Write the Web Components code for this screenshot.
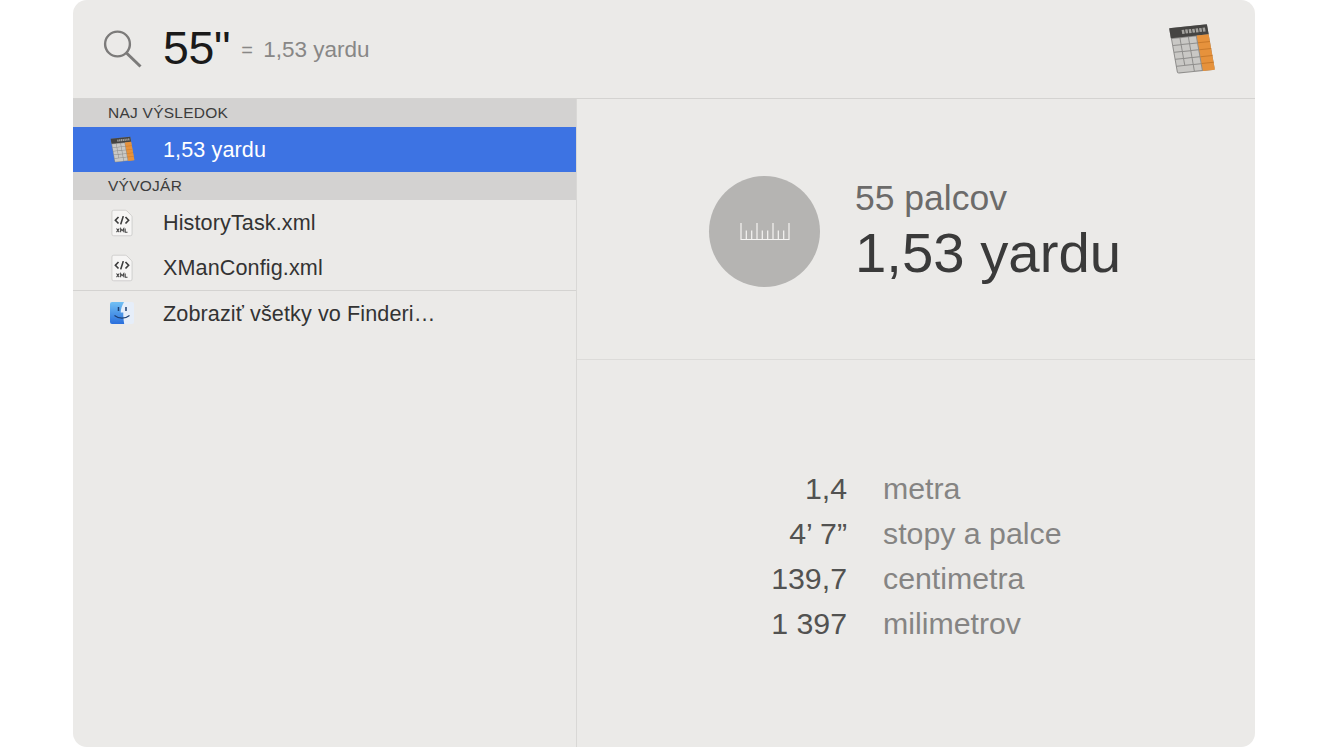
<!DOCTYPE html>
<html lang="sk">
<head>
<meta charset="utf-8">
<title>Spotlight</title>
<style>
  html, body { margin: 0; height: 100%; background: #fff; }
  body { display: flex; justify-content: center; font-family: "Liberation Sans", Arial, sans-serif; }
</style>
</head>
<body>
<svg width="0" height="0" style="position:absolute">
  <defs>
    <linearGradient id="finderBlue" x1="0" y1="0" x2="0" y2="1">
      <stop offset="0" stop-color="#71c0f4"/>
      <stop offset="1" stop-color="#2a6fdc"/>
    </linearGradient>
    <symbol id="calc" viewBox="0 0 48 52">
      <g transform="rotate(-6 24 26) translate(-1.800 0) skewX(4)">
        <rect x="5" y="3" width="38" height="46" rx="2" fill="#8f8e8c"/>
        <rect x="5" y="3" width="38" height="10" fill="#454442"/>
        <rect x="31" y="13" width="12" height="36" fill="#e6923c"/>
        <g fill="#c9c8c5">
          <rect x="6" y="14" width="7.500" height="6"/><rect x="14.500" y="14" width="7.500" height="6"/><rect x="23" y="14" width="7" height="6"/>
          <rect x="6" y="21" width="7.500" height="6"/><rect x="14.500" y="21" width="7.500" height="6"/><rect x="23" y="21" width="7" height="6"/>
          <rect x="6" y="28" width="7.500" height="6"/><rect x="14.500" y="28" width="7.500" height="6"/><rect x="23" y="28" width="7" height="6"/>
          <rect x="6" y="35" width="7.500" height="6"/><rect x="14.500" y="35" width="7.500" height="6"/><rect x="23" y="35" width="7" height="6"/>
          <rect x="6" y="42" width="16" height="6"/><rect x="23" y="42" width="7" height="6"/>
        </g>
        <g fill="#c97a2b"><rect x="31" y="20" width="12" height="1"/><rect x="31" y="27" width="12" height="1"/><rect x="31" y="34" width="12" height="1"/><rect x="31" y="41" width="12" height="1"/></g>
        <path d="M17 8h24" fill="none" stroke="#a3a29e" stroke-width="4" stroke-dasharray="2.500 1"/>
      </g>
    </symbol>
    <symbol id="xml" viewBox="0 0 24 30">
      <path d="M3 1h12.500q1 0 1.700.7l5 5q.8.800.8 1.800V27a2 2 0 0 1-2 2H3a2 2 0 0 1-2-2V3a2 2 0 0 1 2-2z" fill="#f6f5f4" stroke="#cdccca"/>
      <path d="M8.200 8.500 4.800 12l3.400 3.500M15.800 8.500l3.400 3.500-3.400 3.500M13.400 7.500l-2.800 9" fill="none" stroke="#3d3d3d" stroke-width="1.800"/>
      <path d="M6 21l3 4M9 21l-3 4M10.500 25v-4l1.700 2.400 1.700-2.400v4M15.500 21v4H18" fill="none" stroke="#444" stroke-width="1.100"/>
    </symbol>
    <symbol id="finder" viewBox="0 0 24 22">
      <rect x="0" y="0" width="24" height="22" rx="2" fill="#e6eef9"/>
      <path d="M2 0h12c-2 3.500-3.200 7-3.300 10.500h2.600c-.1 3.500.2 7.500.9 11.500H2a2 2 0 0 1-2-2V2a2 2 0 0 1 2-2z" fill="url(#finderBlue)"/>
      <path d="M8.500 5v4M16 5v4" stroke="#1d3f72" stroke-width="1.500" fill="none"/>
      <path d="M4.500 13.500c4.500 3.500 10.500 3.500 15 0" stroke="#1d3f72" stroke-width="1.200" fill="none"/>
    </symbol>
  </defs>
</svg>
<spot-window></spot-window>
<script>
// svg <use> does not cross shadow roots, so symbols are copied in per root
const iconDefs = () => document.querySelector('svg defs').outerHTML;

class SpotSearch extends HTMLElement {
  constructor() {
    super();
    this.attachShadow({ mode: 'open' });
    this.shadowRoot.innerHTML = `
      <style>
        :host { display: flex; align-items: center; height: 99px; box-sizing: border-box; padding: 0 39px 0 30px; border-bottom: 1px solid #d4d3d1; flex: none; }
        .glass { flex: none; margin-top: -1px; }
        .query { font-size: 46.500px; color: #1a1a1a; margin-left: 20px; margin-top: -2px; letter-spacing: -.3px; }
        .answer { font-size: 22.500px; color: #888786; margin-left: 11px; margin-top: 1px; }
        .eq { margin-right: 4px; font-size: 20px; }
        .logo { margin-left: auto; margin-top: -1px; filter: blur(.5px); }
      </style>
      <svg class="glass" width="40" height="40" viewBox="0 0 40 40"><circle cx="14.500" cy="15" r="12.400" fill="none" stroke="#7c7b7a" stroke-width="2.400"/><path d="M23.500 24 37.500 37.500" stroke="#7c7b7a" stroke-width="3" fill="none"/></svg>
      <span class="query">55"</span>
      <span class="answer"><span class="eq">=</span> 1,53 yardu</span>
      <svg class="logo" width="48" height="52" viewBox="0 0 48 52">${iconDefs()}<use href="#calc"/></svg>
    `;
  }
}

class SpotSection extends HTMLElement {
  constructor() {
    super();
    this.attachShadow({ mode: 'open' });
    this.shadowRoot.innerHTML = `
      <style>
        :host { display: flex; align-items: center; height: 28px; padding: 0 35px; background: #d3d2d1; color: #3c3c3c; font-size: 15.500px; letter-spacing: .25px; }
      </style>
      <slot></slot>
    `;
  }
}

const ROW_ICONS = {
  calc: { w: 25, h: 27, vb: '0 0 48 52' },
  xml: { w: 22, h: 28, vb: '0 0 24 30' },
  finder: { w: 24, h: 22, vb: '0 0 24 22' },
};

class SpotRow extends HTMLElement {
  constructor() {
    super();
    this.attachShadow({ mode: 'open' });
    const name = this.getAttribute('icon');
    const { w, h, vb } = ROW_ICONS[name];
    this.shadowRoot.innerHTML = `
      <style>
        :host { display: flex; align-items: center; height: 45px; color: #333; font-size: 21.600px; letter-spacing: .1px; }
        :host([selected]) { background: #3d73e3; color: #fff; }
        .ic { width: 90px; flex: none; display: flex; justify-content: center; padding-left: 8px; box-sizing: border-box; }
        .label { padding-top: 1px; }
        svg { filter: blur(.3px); }
      </style>
      <span class="ic"><svg width="${w}" height="${h}" viewBox="${vb}">${iconDefs()}<use href="#${name}"/></svg></span>
      <span class="label"><slot></slot></span>
    `;
  }
}

class SpotHero extends HTMLElement {
  constructor() {
    super();
    this.attachShadow({ mode: 'open' });
    this.shadowRoot.innerHTML = `
      <style>
        :host { display: flex; align-items: center; height: 261px; box-sizing: border-box; padding-left: 132px; border-bottom: 1px solid #dcdbd9; flex: none; }
        .disc { width: 111px; height: 111px; border-radius: 50%; background: #b5b4b2; display: flex; align-items: center; justify-content: center; flex: none; margin-top: 4px; }
        .txt { margin-left: 35px; margin-top: 10px; display: flex; flex-direction: column; }
        .from { font-size: 35.500px; color: #6c6b6a; line-height: 38px; }
        .to { font-size: 56.300px; color: #3a3a3a; line-height: 72px; }
      </style>
      <div class="disc">
        <svg width="50" height="19" viewBox="0 0 50 19"><path d="M1 1v16.500h48V1M17 1v16.500M33 1v16.500M6.300 8.500v9M11.700 8.500v9M22.300 8.500v9M27.700 8.500v9M38.300 8.500v9M43.700 8.500v9" fill="none" stroke="#f5f4f2" stroke-width="1.200"/></svg>
      </div>
      <div class="txt">
        <span class="from"><slot name="from"></slot></span>
        <span class="to"><slot name="to"></slot></span>
      </div>
    `;
  }
}

class SpotConversions extends HTMLElement {
  constructor() {
    super();
    this.attachShadow({ mode: 'open' });
    this.shadowRoot.innerHTML = `
      <style>
        :host { display: grid; grid-template-columns: 270px 1fr; grid-auto-rows: 45px; column-gap: 36px; align-items: center; padding-top: 106px; font-size: 30.300px; }
        ::slotted(.v) { text-align: right; color: #525251; }
        ::slotted(.u) { color: #858483; }
      </style>
      <slot></slot>
    `;
  }
}

class SpotWindow extends HTMLElement {
  constructor() {
    super();
    this.attachShadow({ mode: 'open' });
    this.shadowRoot.innerHTML = `
      <style>
        :host { display: flex; flex-direction: column; width: 1182px; height: 747px; background: #ebeae8; border-radius: 14px; overflow: hidden; }
        .body { display: flex; flex: 1; min-height: 0; }
        .list { width: 503px; flex: none; border-right: 1px solid #d9d8d6; }
        .detail { flex: 1; display: flex; flex-direction: column; }
        .last { border-top: 1px solid #d4d3d1; }
        .last spot-row { height: 44px; }
      </style>
      <spot-search></spot-search>
      <div class="body">
        <div class="list">
          <spot-section>NAJ VÝSLEDOK</spot-section>
          <spot-row icon="calc" selected>1,53 yardu</spot-row>
          <spot-section>VÝVOJÁR</spot-section>
          <spot-row icon="xml">HistoryTask.xml</spot-row>
          <spot-row icon="xml">XManConfig.xml</spot-row>
          <div class="last"><spot-row icon="finder">Zobraziť všetky vo Finderi…</spot-row></div>
        </div>
        <div class="detail">
          <spot-hero>
            <span slot="from">55 palcov</span>
            <span slot="to">1,53 yardu</span>
          </spot-hero>
          <spot-conversions>
            <span class="v">1,4</span><span class="u">metra</span>
            <span class="v">4’ 7”</span><span class="u">stopy a palce</span>
            <span class="v">139,7</span><span class="u">centimetra</span>
            <span class="v">1 397</span><span class="u">milimetrov</span>
          </spot-conversions>
        </div>
      </div>
    `;
  }
}

customElements.define('spot-search', SpotSearch);
customElements.define('spot-section', SpotSection);
customElements.define('spot-row', SpotRow);
customElements.define('spot-hero', SpotHero);
customElements.define('spot-conversions', SpotConversions);
customElements.define('spot-window', SpotWindow);
</script>
</body>
</html>
